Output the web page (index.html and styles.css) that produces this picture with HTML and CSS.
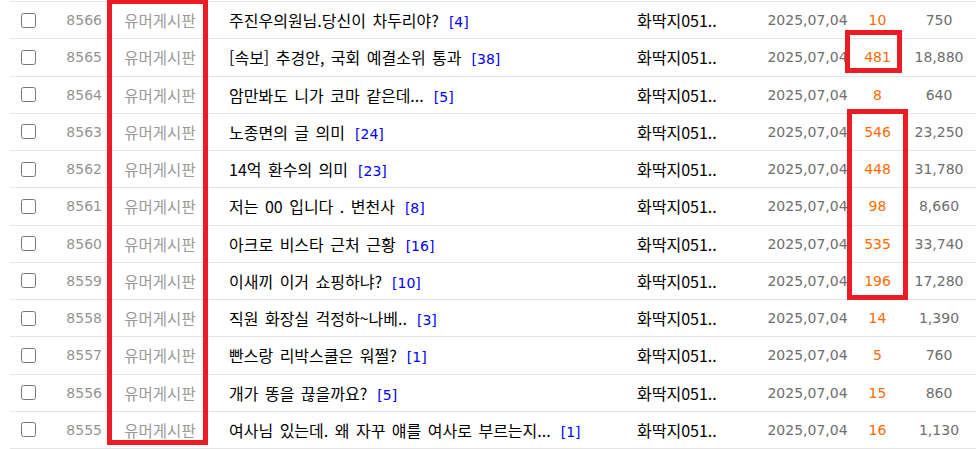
FILE: index.html
```html
<!DOCTYPE html>
<html lang="ko">
<head>
    <meta charset="UTF-8">
    <meta name="viewport" content="width=device-width, initial-scale=1.0">
    <title>유머게시판</title>
    <link rel="stylesheet" href="styles.css">
</head>
<body>

    <div class="board">
        <div class="row">
            <span class="chk"><input type="checkbox"></span>
            <span class="num">8566</span>
            <span class="cat">유머게시판</span>
            <span class="subject">주진우의원님.당신이 차두리야?<span class="cmt">[4]</span></span>
            <span class="author">화딱지051..</span>
            <span class="date">2025,07,04</span>
            <span class="reco">10</span>
            <span class="hit">750</span>
        </div>
        <div class="row">
            <span class="chk"><input type="checkbox"></span>
            <span class="num">8565</span>
            <span class="cat">유머게시판</span>
            <span class="subject">[속보] 추경안, 국회 예결소위 통과<span class="cmt">[38]</span></span>
            <span class="author">화딱지051..</span>
            <span class="date">2025,07,04</span>
            <span class="reco">481</span>
            <span class="hit">18,880</span>
        </div>
        <div class="row">
            <span class="chk"><input type="checkbox"></span>
            <span class="num">8564</span>
            <span class="cat">유머게시판</span>
            <span class="subject">암만봐도 니가 코마 같은데...<span class="cmt">[5]</span></span>
            <span class="author">화딱지051..</span>
            <span class="date">2025,07,04</span>
            <span class="reco">8</span>
            <span class="hit">640</span>
        </div>
        <div class="row">
            <span class="chk"><input type="checkbox"></span>
            <span class="num">8563</span>
            <span class="cat">유머게시판</span>
            <span class="subject">노종면의 글 의미<span class="cmt">[24]</span></span>
            <span class="author">화딱지051..</span>
            <span class="date">2025,07,04</span>
            <span class="reco">546</span>
            <span class="hit">23,250</span>
        </div>
        <div class="row">
            <span class="chk"><input type="checkbox"></span>
            <span class="num">8562</span>
            <span class="cat">유머게시판</span>
            <span class="subject">14억 환수의 의미<span class="cmt">[23]</span></span>
            <span class="author">화딱지051..</span>
            <span class="date">2025,07,04</span>
            <span class="reco">448</span>
            <span class="hit">31,780</span>
        </div>
        <div class="row">
            <span class="chk"><input type="checkbox"></span>
            <span class="num">8561</span>
            <span class="cat">유머게시판</span>
            <span class="subject">저는 00 입니다 . 변천사<span class="cmt">[8]</span></span>
            <span class="author">화딱지051..</span>
            <span class="date">2025,07,04</span>
            <span class="reco">98</span>
            <span class="hit">8,660</span>
        </div>
        <div class="row">
            <span class="chk"><input type="checkbox"></span>
            <span class="num">8560</span>
            <span class="cat">유머게시판</span>
            <span class="subject">아크로 비스타 근처 근황<span class="cmt">[16]</span></span>
            <span class="author">화딱지051..</span>
            <span class="date">2025,07,04</span>
            <span class="reco">535</span>
            <span class="hit">33,740</span>
        </div>
        <div class="row">
            <span class="chk"><input type="checkbox"></span>
            <span class="num">8559</span>
            <span class="cat">유머게시판</span>
            <span class="subject">이새끼 이거 쇼핑하냐?<span class="cmt">[10]</span></span>
            <span class="author">화딱지051..</span>
            <span class="date">2025,07,04</span>
            <span class="reco">196</span>
            <span class="hit">17,280</span>
        </div>
        <div class="row">
            <span class="chk"><input type="checkbox"></span>
            <span class="num">8558</span>
            <span class="cat">유머게시판</span>
            <span class="subject">직원 화장실 걱정하~나베..<span class="cmt">[3]</span></span>
            <span class="author">화딱지051..</span>
            <span class="date">2025,07,04</span>
            <span class="reco">14</span>
            <span class="hit">1,390</span>
        </div>
        <div class="row">
            <span class="chk"><input type="checkbox"></span>
            <span class="num">8557</span>
            <span class="cat">유머게시판</span>
            <span class="subject">빤스랑 리박스쿨은 워쩔?<span class="cmt">[1]</span></span>
            <span class="author">화딱지051..</span>
            <span class="date">2025,07,04</span>
            <span class="reco">5</span>
            <span class="hit">760</span>
        </div>
        <div class="row">
            <span class="chk"><input type="checkbox"></span>
            <span class="num">8556</span>
            <span class="cat">유머게시판</span>
            <span class="subject">개가 똥을 끊을까요?<span class="cmt">[5]</span></span>
            <span class="author">화딱지051..</span>
            <span class="date">2025,07,04</span>
            <span class="reco">15</span>
            <span class="hit">860</span>
        </div>
        <div class="row">
            <span class="chk"><input type="checkbox"></span>
            <span class="num">8555</span>
            <span class="cat">유머게시판</span>
            <span class="subject">여사님 있는데. 왜 자꾸 얘를 여사로 부르는지...<span class="cmt">[1]</span></span>
            <span class="author">화딱지051..</span>
            <span class="date">2025,07,04</span>
            <span class="reco">16</span>
            <span class="hit">1,130</span>
        </div>
    </div>

    <!-- red highlight boxes drawn over the list -->
    <div class="mark mark-cat"></div>
    <div class="mark mark-one"></div>
    <div class="mark mark-many"></div>

</body>
</html>
```

FILE: styles.css
```css
html, body {
    margin: 0;
    padding: 0;
    background: #fff;
    overflow: hidden;
}

body {
    font-family: "DejaVu Sans", "Noto Sans CJK KR", sans-serif;
    font-size: 14px;
    color: #000;
    position: relative;
    height: 449px;
}

.board {
    margin: 1px 0 0 10px;
    border-bottom: 1px solid #e5e5e5;
}

.row {
    display: grid;
    grid-template-columns: 36px 56px 116px 419px 120px 101px 39px 79px;
    align-items: center;
    height: 37.25px;
    box-sizing: border-box;
    border-top: 1px solid #e5e5e5;
    white-space: nowrap;
}

.chk {
    display: flex;
    justify-content: center;
}

.chk input {
    width: 15px;
    height: 15px;
    margin: 0;
}

.num {
    text-align: right;
    color: #949494;
}

.cat {
    text-align: center;
    color: #9a9a9a;
    font-family: "Noto Sans CJK KR", sans-serif;
    font-size: 15.5px;
}

.subject {
    padding-left: 11px;
    overflow: hidden;
    font-family: "Noto Sans CJK KR", sans-serif;
    font-size: 16px;
    word-spacing: 2px;
}

.cmt {
    color: #0000ff;
    margin-left: 10px;
    font-family: "DejaVu Sans", sans-serif;
    font-size: 14px;
    word-spacing: 0;
}

.author {
    color: #000;
    font-family: "Noto Sans CJK KR", sans-serif;
    font-size: 16px;
}

.date {
    text-align: center;
    color: #6e6e6e;
}

.reco {
    text-align: center;
    color: #ff6a00;
}

.hit {
    text-align: center;
    padding-left: 5px;
    color: #6e6e6e;
}

/* Highlight boxes */
.mark {
    position: absolute;
    box-sizing: border-box;
    border: 5px solid #ed1c24;
}

.mark-cat {
    left: 107px;
    top: -1px;
    width: 101px;
    height: 446px;
}

.mark-one {
    left: 845px;
    top: 30px;
    width: 57px;
    height: 43px;
}

.mark-many {
    left: 847px;
    top: 109px;
    width: 61px;
    height: 191px;
}
```
